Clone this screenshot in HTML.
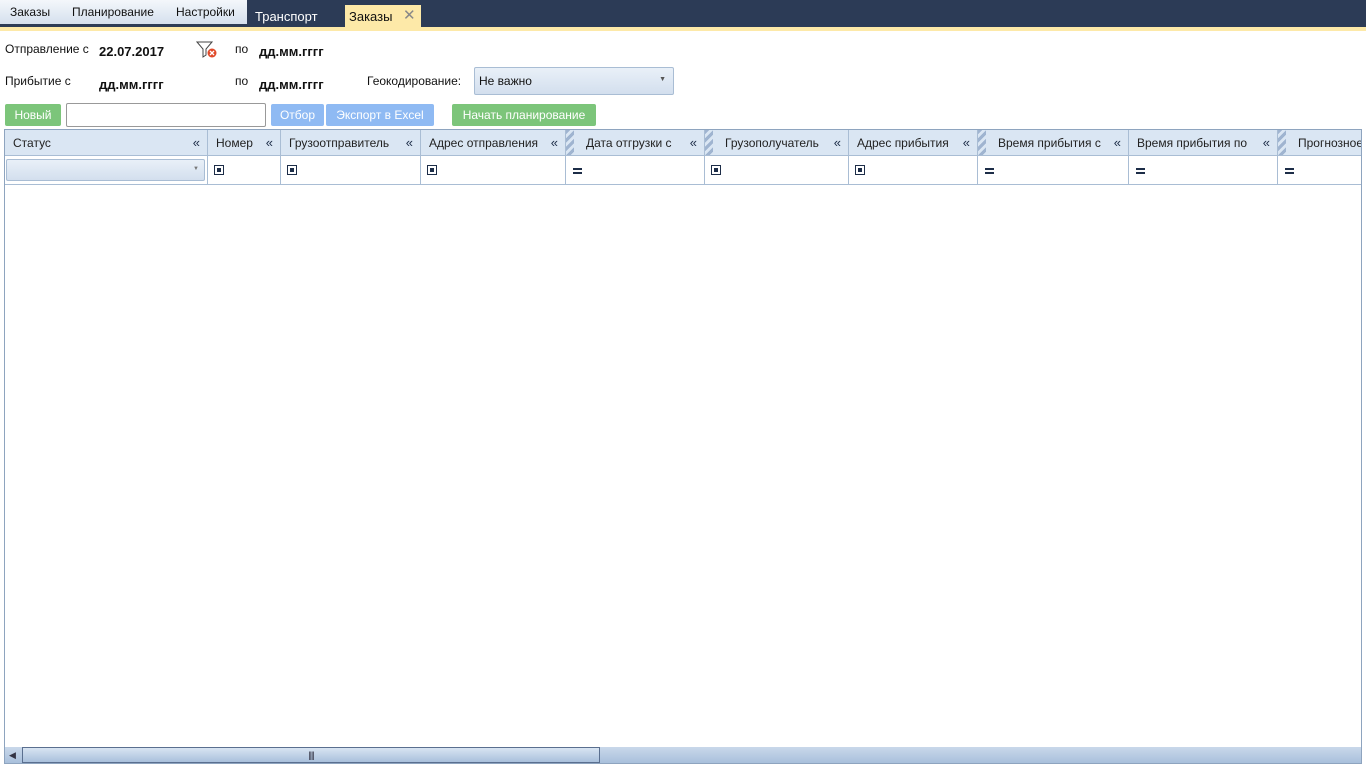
<!DOCTYPE html>
<html><head><meta charset="utf-8"><style>
*{margin:0;padding:0;box-sizing:border-box}
body{width:1366px;height:768px;overflow:hidden;background:#fff;font-family:"Liberation Sans",sans-serif;font-size:12px;color:#111;position:relative}
.a{position:absolute}
.top{left:0;top:0;width:1366px;height:27px;background:#2c3b56}
.yl{left:0;top:27px;width:1366px;height:4px;background:#fde9a8}
.tabs{left:0;top:0;width:247px;height:24px;background:linear-gradient(#f4f7fb,#d5e0ee)}
.t{top:5px;font-size:12px}
.b{font-weight:bold;font-size:13px}
.btn{height:22px;top:104px;color:#fff;font-size:12px;text-align:center;line-height:22px;border-radius:2px}
.g{background:#7cc57a}.bl{background:#8fbaf3}
.grid{left:4px;top:129px;width:1358px;height:635px;border:1px solid #8ea4bf}
.hd{top:130px;height:26px;background-color:#dae6f3;border-right:1px solid #a9bdd4;border-bottom:1px solid #a9bdd4;line-height:26px;padding-left:8px;overflow:hidden;white-space:nowrap;font-size:12px;color:#222}
.fl{top:156px;height:29px;border-right:1px solid #a9bdd4;border-bottom:1px solid #a9bdd4}
.ch{position:absolute;right:7px;top:0;font-size:13px;color:#1d2d48}
.st{background-image:repeating-linear-gradient(135deg,#9fb4d0 0 3px,#dae6f3 3px 6px);background-size:8px 100%;background-repeat:no-repeat;padding-left:20px}
.sq{position:absolute;left:6px;top:9px;width:10px;height:10px;border:1px solid #1d2d48}
.sq:after{content:"";position:absolute;left:2px;top:2px;width:4px;height:4px;background:#1d2d48}
.eq{position:absolute;left:7px;top:12px;width:9px;height:6px;border-top:2px solid #1d2d48;border-bottom:2px solid #1d2d48}
</style></head><body>
<div class="a top"></div><div class="a yl"></div>
<div class="a tabs"></div>
<div class="a t" style="left:10px">Заказы</div>
<div class="a t" style="left:72px">Планирование</div>
<div class="a t" style="left:176px">Настройки</div>
<div class="a t" style="left:255px;top:9px;color:#fff;font-size:13px">Транспорт</div>
<div class="a" style="left:345px;top:5px;width:76px;height:23px;background:#fde9a8"></div>
<div class="a" style="left:349px;top:9px;font-size:13px">Заказы</div>
<div class="a" style="left:403px;top:6px;font-size:15px;color:#888">✕</div>

<div class="a" style="left:5px;top:42px">Отправление с</div>
<div class="a b" style="left:99px;top:44px">22.07.2017</div>
<svg class="a" style="left:196px;top:41px" width="22" height="18"><path d="M1 1h15l-6 7v6l-3 2V8z" fill="#fff" stroke="#444"/><circle cx="16" cy="12" r="4.5" fill="#e04a2a"/><path d="M14 10l4 4M18 10l-4 4" stroke="#fff" stroke-width="1.3"/></svg>
<div class="a" style="left:235px;top:42px">по</div>
<div class="a b" style="left:259px;top:44px">дд.мм.гггг</div>
<div class="a" style="left:5px;top:74px">Прибытие с</div>
<div class="a b" style="left:99px;top:77px">дд.мм.гггг</div>
<div class="a" style="left:235px;top:74px">по</div>
<div class="a b" style="left:259px;top:77px">дд.мм.гггг</div>
<div class="a" style="left:367px;top:74px">Геокодирование:</div>
<div class="a" style="left:474px;top:67px;width:200px;height:28px;border:1px solid #a9bdd4;border-radius:2px;background:linear-gradient(#e9f0f8,#d3dfee);padding:6px 4px;font-size:12px">Не важно<span style="position:absolute;right:7px;top:8px;font-size:7px;color:#555">▼</span></div>

<div class="a btn g" style="left:5px;width:56px">Новый</div>
<div class="a" style="left:66px;top:103px;width:200px;height:24px;border:1px solid #999;border-radius:2px"></div>
<div class="a btn bl" style="left:271px;width:53px">Отбор</div>
<div class="a btn bl" style="left:326px;width:108px">Экспорт в Excel</div>
<div class="a btn g" style="left:452px;width:144px">Начать планирование</div>

<div class="a grid"></div>
<div class="a hd" style="left:5px;width:203px">Статус<span class="ch">«</span></div>
<div class="a hd" style="left:208px;width:73px">Номер<span class="ch">«</span></div>
<div class="a hd" style="left:281px;width:140px">Грузоотправитель<span class="ch">«</span></div>
<div class="a hd" style="left:421px;width:145px">Адрес отправления<span class="ch">«</span></div>
<div class="a hd st" style="left:566px;width:139px">Дата отгрузки с<span class="ch">«</span></div>
<div class="a hd st" style="left:705px;width:144px">Грузополучатель<span class="ch">«</span></div>
<div class="a hd" style="left:849px;width:129px">Адрес прибытия<span class="ch">«</span></div>
<div class="a hd st" style="left:978px;width:151px">Время прибытия с<span class="ch">«</span></div>
<div class="a hd" style="left:1129px;width:149px">Время прибытия по<span class="ch">«</span></div>
<div class="a hd st" style="left:1278px;width:83px;border-right:none">Прогнозное</div>

<div class="a fl" style="left:5px;width:203px"><div style="position:absolute;left:1px;top:3px;width:199px;height:22px;border:1px solid #a9bdd4;border-radius:2px;background:linear-gradient(#e9f0f8,#d3dfee)"><span style="position:absolute;right:5px;top:6px;font-size:6px;color:#777">▼</span></div></div>
<div class="a fl" style="left:208px;width:73px"><div class="sq"></div></div>
<div class="a fl" style="left:281px;width:140px"><div class="sq"></div></div>
<div class="a fl" style="left:421px;width:145px"><div class="sq"></div></div>
<div class="a fl" style="left:566px;width:139px"><div class="eq"></div></div>
<div class="a fl" style="left:705px;width:144px"><div class="sq"></div></div>
<div class="a fl" style="left:849px;width:129px"><div class="sq"></div></div>
<div class="a fl" style="left:978px;width:151px"><div class="eq"></div></div>
<div class="a fl" style="left:1129px;width:149px"><div class="eq"></div></div>
<div class="a fl" style="left:1278px;width:83px;border-right:none"><div class="eq"></div></div>

<div class="a" style="left:5px;top:747px;width:1356px;height:16px;background:linear-gradient(#c9d8ea,#a9c0dc)"></div>
<div class="a" style="left:9px;top:750px;font-size:9px;color:#334">◀</div>
<div class="a" style="left:22px;top:747px;width:578px;height:16px;border:1px solid #5a6f8f;background:linear-gradient(#d8e4f2,#a9c0dc);text-align:center;font-size:9px;line-height:14px;color:#334;letter-spacing:-1px">||||</div>
</body></html>
